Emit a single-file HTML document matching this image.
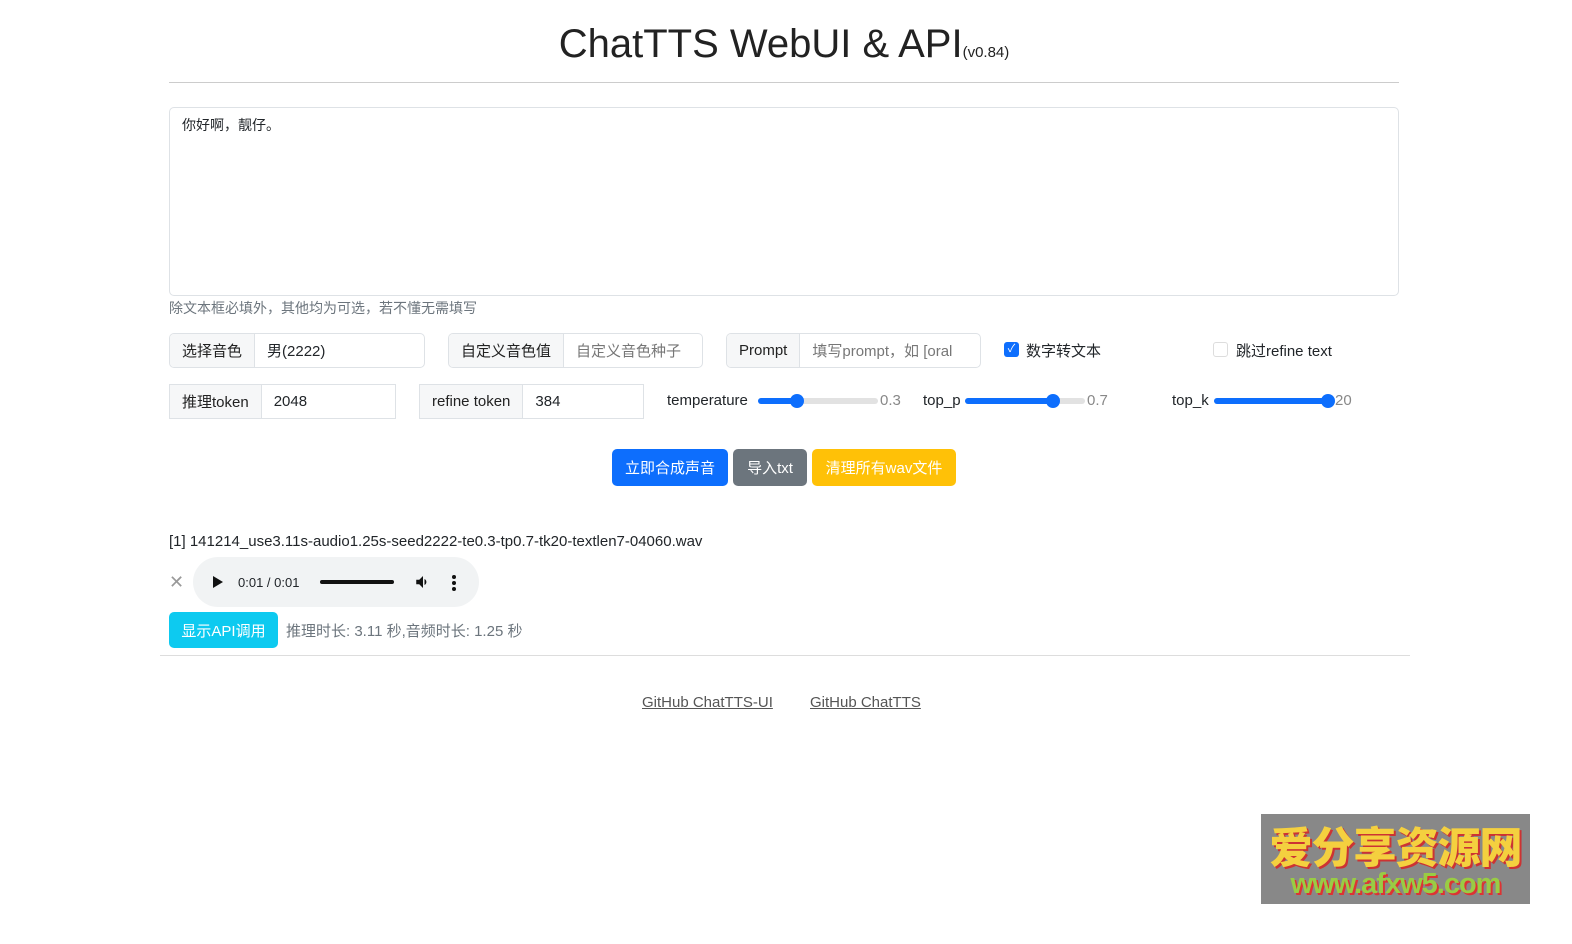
<!DOCTYPE html>
<html><head><meta charset="utf-8"><style>
*{box-sizing:border-box;margin:0;padding:0}
body{width:1572px;height:944px;background:#fff;font-family:"Liberation Sans","Noto Sans CJK SC",sans-serif;color:#212529;position:relative;overflow:hidden;font-size:15px}
.a{position:absolute}
h1{position:absolute;left:0;width:1568px;top:22px;text-align:center;font-weight:400;font-size:40px;color:#222}
h1 small{font-size:15px}
.hr{position:absolute;height:1px;background:#ccc}
.ta{left:169px;top:107px;width:1230px;height:189px;border:1px solid #dee2e6;border-radius:5px;padding:7px 12px;font-size:14px}
.grp{position:absolute;display:flex;border:1px solid #dee2e6;border-radius:5px;height:35px;overflow:hidden;font-size:15px}
.grp .l{background:#f6f7f8;border-right:1px solid #dee2e6;padding:0 12px;display:flex;align-items:center;color:#222}
.grp .v{padding:0 12px;display:flex;align-items:center;flex:1}
.ph{color:#777}
.sl{position:absolute;height:6px;border-radius:3px;background:#e2e2e2}
.sl i{position:absolute;left:0;top:0;height:6px;border-radius:3px;background:#0d6efd}
.sl b{position:absolute;top:-4px;width:14px;height:14px;border-radius:50%;background:#0d6efd}
.btn{position:absolute;top:449px;height:37px;border-radius:5px;color:#fff;display:flex;align-items:center;justify-content:center;font-size:15px}
.lk{position:absolute;top:694px;color:#555;text-decoration:underline;font-size:15px}
</style></head><body>
<h1>ChatTTS WebUI &amp; API<small>(v0.84)</small></h1>
<div class="hr" style="left:169px;width:1230px;top:82px"></div>
<div class="a ta">你好啊，靓仔。</div>
<div class="a" style="left:169px;top:298px;font-size:14px;color:#6c757d">除文本框必填外，其他均为可选，若不懂无需填写</div>

<div class="grp" style="left:169px;top:333px;width:256px"><div class="l">选择音色</div><div class="v">男(2222)</div></div>
<div class="grp" style="left:448px;top:333px;width:255px"><div class="l">自定义音色值</div><div class="v ph">自定义音色种子</div></div>
<div class="grp" style="left:726px;top:333px;width:255px"><div class="l">Prompt</div><div class="v ph" style="white-space:nowrap">填写prompt，如 [oral</div></div>
<div class="a" style="left:1004px;top:342px;width:15px;height:15px;border-radius:3px;background:#0d6efd;color:#fff;font-size:11px;text-align:center;line-height:15px">✓</div>
<div class="a" style="left:1026px;top:340px">数字转文本</div>
<div class="a" style="left:1213px;top:342px;width:15px;height:15px;border-radius:3px;border:1px solid #ddd"></div>
<div class="a" style="left:1236px;top:340px">跳过refine text</div>

<div class="grp" style="left:169px;top:384px;width:227px;border-radius:0"><div class="l">推理token</div><div class="v">2048</div></div>
<div class="grp" style="left:419px;top:384px;width:225px;border-radius:0"><div class="l" style="background:#f6f7f8">refine token</div><div class="v">384</div></div>
<div class="a" style="left:667px;top:392px">temperature</div>
<div class="sl" style="left:758px;top:398px;width:120px"><i style="width:40px"></i><b style="left:32px"></b></div>
<div class="a" style="left:880px;top:392px;color:#888">0.3</div>
<div class="a" style="left:923px;top:392px">top_p</div>
<div class="sl" style="left:965px;top:398px;width:120px"><i style="width:90px"></i><b style="left:81px"></b></div>
<div class="a" style="left:1087px;top:392px;color:#888">0.7</div>
<div class="a" style="left:1172px;top:392px">top_k</div>
<div class="sl" style="left:1214px;top:398px;width:120px"><i style="width:120px"></i><b style="left:107px"></b></div>
<div class="a" style="left:1335px;top:392px;color:#888">20</div>

<div class="btn" style="left:612px;width:116px;background:#0d6efd">立即合成声音</div>
<div class="btn" style="left:733px;width:74px;background:#6c757d">导入txt</div>
<div class="btn" style="left:812px;width:144px;background:#ffc107">清理所有wav文件</div>

<div class="a" style="left:169px;top:533px">[1] 141214_use3.11s-audio1.25s-seed2222-te0.3-tp0.7-tk20-textlen7-04060.wav</div>
<div class="a" style="left:169px;top:572px;color:#999;font-size:18px">✕</div>
<div class="a" style="left:193px;top:557px;width:286px;height:50px;border-radius:25px;background:#f1f3f4"></div>
<div class="a" style="left:213px;top:576px;width:0;height:0;border-left:10px solid #111;border-top:6px solid transparent;border-bottom:6px solid transparent"></div>
<div class="a" style="left:238px;top:575px;font-size:13px">0:01 / 0:01</div>
<div class="a" style="left:320px;top:580px;width:74px;height:4px;background:#111;border-radius:2px"></div>
<svg class="a" style="left:414px;top:573px" width="18" height="18" viewBox="0 0 24 24"><path d="M3 9v6h4l5 5V4L7 9H3zm13.5 3A4.5 4.5 0 0 0 14 8v8a4.5 4.5 0 0 0 2.5-4z" fill="#111"/></svg>
<div class="a" style="left:452px;top:575px;width:4px"><div style="width:4px;height:4px;background:#111;border-radius:2px;margin-bottom:2px"></div><div style="width:4px;height:4px;background:#111;border-radius:2px;margin-bottom:2px"></div><div style="width:4px;height:4px;background:#111;border-radius:2px"></div></div>

<div class="btn" style="left:169px;top:612px;width:109px;height:36px;background:#0dcaf0">显示API调用</div>
<div class="a" style="left:286px;top:620px;color:#6c757d">推理时长: 3.11 秒,音频时长: 1.25 秒</div>
<div class="hr" style="left:160px;width:1250px;top:655px;background:#ddd"></div>
<a class="lk" style="left:642px">GitHub ChatTTS-UI</a>
<a class="lk" style="left:810px">GitHub ChatTTS</a>

<div class="a" style="left:1261px;top:814px;width:269px;height:90px;background:#888;overflow:hidden">
<div style="position:absolute;left:0;top:0px;width:269px;text-align:center;font-size:43px;font-weight:900;color:#f4d03f;letter-spacing:-1px;white-space:nowrap;text-shadow:2px 2px #c33">爱分享资源网</div>
<div style="position:absolute;left:0;top:54px;width:269px;text-align:center;font-size:29px;font-weight:900;color:#9c4;letter-spacing:-1px;font-family:'Liberation Sans',sans-serif;text-shadow:2px 2px #d33">www.afxw5.com</div>
</div>
</body></html>
